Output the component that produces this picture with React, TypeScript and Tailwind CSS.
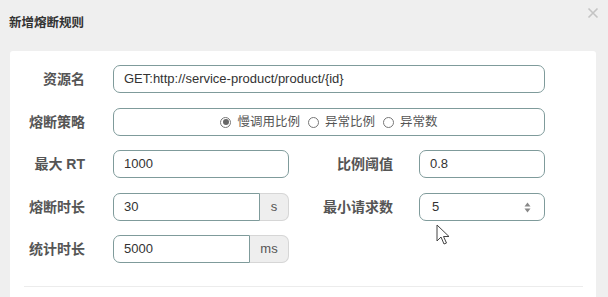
import React from "react";

const font = { fontFamily: '"Liberation Sans", Arial, "Noto Sans CJK SC", sans-serif' };

function Label({ children, w }: { children: React.ReactNode; w: string }) {
  return (
    <div className={`${w} shrink-0 text-right text-[14px] font-bold text-[#555] leading-[28px]`}>
      {children}
    </div>
  );
}

function Radio({ checked, label }: { checked?: boolean; label: string }) {
  return (
    <span className="flex items-center gap-[6px]">
      <span className="w-[11px] h-[11px] rounded-full border border-[#777] flex items-center justify-center bg-white">
        {checked && <span className="w-[6px] h-[6px] rounded-full bg-[#666]" />}
      </span>
      <span>{label}</span>
    </span>
  );
}

export default function App() {
  return (
    <div className="relative w-[608px] h-[297px] bg-[#efefef] overflow-hidden text-[#333]" style={font}>
      <div className="flex items-start justify-between h-[51px]">
        <div className="pl-[9px] pt-[14px] text-[12.5px] font-bold text-[#333] leading-[18px]">新增熔断规则</div>
        <div className="pr-[9px] pt-[7px]">
          <svg width="12" height="12" viewBox="0 0 12 12">
            <path d="M1.5 1.5 L10.5 10.5 M10.5 1.5 L1.5 10.5" stroke="#c4c4c4" strokeWidth="1.6" />
          </svg>
        </div>
      </div>
      <div className="ml-[10px] w-[586px] h-[260px] bg-white rounded-t-[3px] pt-[14px] pl-[14px] pr-[13px]">
        <div className="flex items-center h-[28px]">
          <Label w="w-[61px]">资源名</Label>
          <div className="ml-[28px] w-[432px] h-[28px] border border-[#7f9b9b] rounded-[7px] px-[10px] text-[13px] leading-[26px]">
            GET:http://service-product/product/{"{id}"}
          </div>
        </div>
        <div className="flex items-center h-[28px] mt-[15px]">
          <Label w="w-[61px]">熔断策略</Label>
          <div className="ml-[28px] w-[432px] h-[28px] border border-[#7f9b9b] rounded-[7px] flex items-center justify-center gap-[8px] text-[12.5px] text-[#555]">
            <Radio checked label="慢调用比例" />
            <Radio label="异常比例" />
            <Radio label="异常数" />
          </div>
        </div>
        <div className="flex items-center h-[28px] mt-[14px]">
          <Label w="w-[61px]">最大 RT</Label>
          <div className="ml-[28px] w-[176px] h-[28px] border border-[#7f9b9b] rounded-[7px] px-[10px] text-[13px] leading-[26px]">
            1000
          </div>
          <Label w="w-[104px]">比例阈值</Label>
          <div className="ml-[26px] w-[126px] h-[28px] border border-[#7f9b9b] rounded-[7px] px-[10px] text-[13px] leading-[26px]">
            0.8
          </div>
        </div>
        <div className="flex items-center h-[28px] mt-[15px]">
          <Label w="w-[61px]">熔断时长</Label>
          <div className="ml-[28px] w-[176px] h-[28px] flex">
            <div className="flex-1 border border-[#7f9b9b] rounded-l-[7px] px-[10px] text-[13px] leading-[26px]">30</div>
            <div className="w-[29px] bg-[#eeeeee] border border-l-0 border-[#d6d6d6] rounded-r-[7px] text-center text-[13px] leading-[26px] text-[#555]">s</div>
          </div>
          <Label w="w-[104px]">最小请求数</Label>
          <div className="ml-[26px] w-[126px] h-[28px] border border-[#7f9b9b] rounded-[7px] pl-[12px] pr-[13px] text-[13px] leading-[26px] flex items-center justify-between">
            <span>5</span>
            <svg width="7" height="11" viewBox="0 0 7 11">
              <path d="M3.5 0.5 L6.5 4.5 L0.5 4.5 Z M3.5 10.5 L6.5 6.5 L0.5 6.5 Z" fill="#888" />
            </svg>
          </div>
        </div>
        <div className="flex items-center h-[28px] mt-[14px]">
          <Label w="w-[61px]">统计时长</Label>
          <div className="ml-[28px] w-[176px] h-[28px] flex">
            <div className="flex-1 border border-[#7f9b9b] rounded-l-[7px] px-[10px] text-[13px] leading-[26px]">5000</div>
            <div className="w-[39px] bg-[#eeeeee] border border-l-0 border-[#d6d6d6] rounded-r-[7px] text-center text-[13px] leading-[26px] text-[#555]">ms</div>
          </div>
        </div>
        <div className="mt-[23px] w-[559px] border-t border-[#ececec]" />
      </div>
      <svg className="absolute left-[436px] top-[224px]" width="16" height="22" viewBox="0 0 16 22">
        <path d="M1 1 L1 17 L5 13 L8 20 L10.5 19 L7.5 12.5 L13 12.5 Z" fill="white" stroke="#444" strokeWidth="1" strokeLinejoin="round" />
      </svg>
    </div>
  );
}
